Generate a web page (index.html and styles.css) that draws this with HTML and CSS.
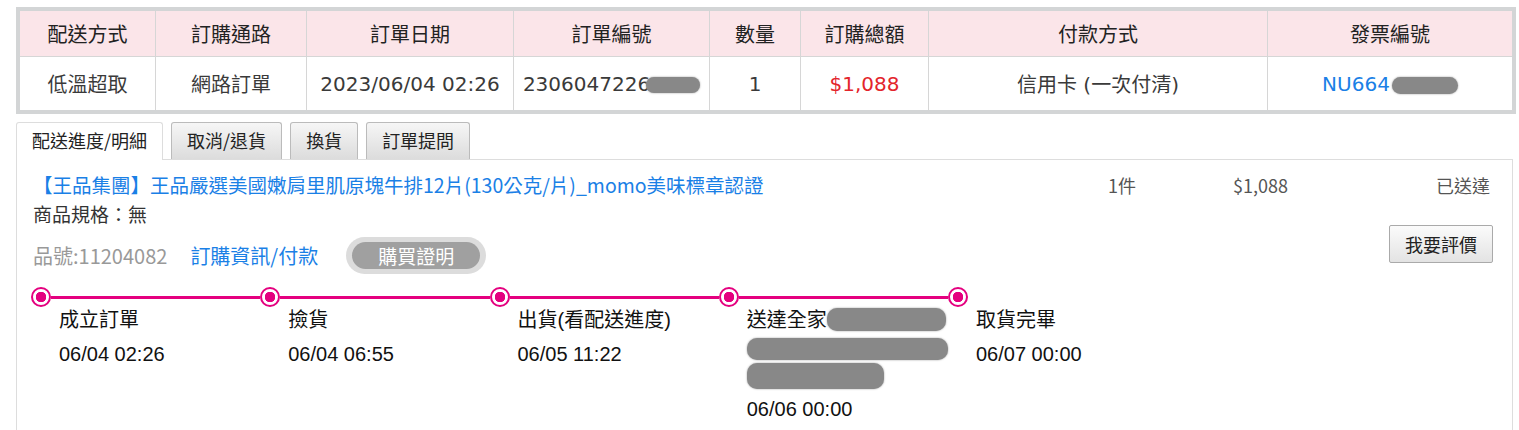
FILE: index.html
```html
<!DOCTYPE html>
<html lang="zh-Hant">
<head>
  <meta charset="UTF-8">
  <meta name="viewport" content="width=device-width, initial-scale=1.0">
  <title>訂單明細</title>
  <link rel="stylesheet" href="styles.css">
</head>
<body>
  <div class="page">
    <!-- order summary -->
    <table class="order-table">
      <colgroup>
        <col style="width:136px">
        <col style="width:151px">
        <col style="width:207px">
        <col style="width:196px">
        <col style="width:91px">
        <col style="width:128px">
        <col style="width:339px">
        <col style="width:244px">
      </colgroup>
      <thead>
        <tr>
          <th>配送方式</th>
          <th>訂購通路</th>
          <th>訂單日期</th>
          <th>訂單編號</th>
          <th>數量</th>
          <th>訂購總額</th>
          <th>付款方式</th>
          <th>發票編號</th>
        </tr>
      </thead>
      <tbody>
        <tr>
          <td>低溫超取</td>
          <td>網路訂單</td>
          <td>2023/06/04 02:26</td>
          <td>2306047226<span class="blot blot-order"></span></td>
          <td>1</td>
          <td class="total">$1,088</td>
          <td>信用卡 (一次付清)</td>
          <td><a class="invoice" href="#">NU664</a><span class="blot blot-invoice"></span></td>
        </tr>
      </tbody>
    </table>

    <!-- tabs -->
    <div class="tabs">
      <span class="tab active">配送進度/明細</span>
      <span class="tab">取消/退貨</span>
      <span class="tab">換貨</span>
      <span class="tab">訂單提問</span>
    </div>

    <div class="panel">
      <div class="item-row">
        <a class="item-name" href="#">【王品集團】王品嚴選美國嫩肩里肌原塊牛排12片(130公克/片)_momo美味標章認證</a>
        <span class="item-qty">1件</span>
        <span class="item-price">$1,088</span>
        <span class="item-status">已送達</span>
      </div>

      <div class="item-detail">
        <div class="item-info">
          <div class="spec">商品規格：無</div>
          <div class="meta">
            <span class="sku">品號:11204082</span>
            <a class="pay-link" href="#">訂購資訊/付款</a>
            <span class="proof"><span>購買證明</span></span>
          </div>
        </div>
        <button class="review" type="button">我要評價</button>
      </div>

      <!-- delivery progress -->
      <ol class="timeline">
        <li>
          <div class="track"><span class="dot"></span><span class="bar"></span></div>
          <div class="step-name">成立訂單</div>
          <div class="step-time">06/04 02:26</div>
        </li>
        <li>
          <div class="track"><span class="dot"></span><span class="bar"></span></div>
          <div class="step-name">撿貨</div>
          <div class="step-time">06/04 06:55</div>
        </li>
        <li>
          <div class="track"><span class="dot"></span><span class="bar"></span></div>
          <div class="step-name">出貨(看配送進度)</div>
          <div class="step-time">06/05 11:22</div>
        </li>
        <li>
          <div class="track"><span class="dot"></span><span class="bar"></span></div>
          <div class="step-name">送達全家<span class="blot blot-store"></span><br><span class="blot blot-addr"></span><br><span class="blot blot-addr2"></span></div>
          <div class="step-time">06/06 00:00</div>
        </li>
        <li>
          <div class="track"><span class="dot"></span></div>
          <div class="step-name">取貨完畢</div>
          <div class="step-time">06/07 00:00</div>
        </li>
      </ol>
    </div>
  </div>
</body>
</html>
```

FILE: styles.css
```css
body {
  margin: 0;
  background: #fff;
  color: #333;
  font-family: "Noto Sans CJK TC", sans-serif;
}
a {
  text-decoration: none;
}
.page {
  padding: 7px 3px 0 16px;
}

/* order table */
.order-table {
  width: 100%;
  table-layout: fixed;
  border-collapse: separate;
  border-spacing: 0;
  border: 4px solid #d3d5d6;
  font-family: "DejaVu Sans", "Noto Sans CJK TC", sans-serif;
  font-size: 20px;
}
.order-table th,
.order-table td {
  padding: 0;
  text-align: center;
  vertical-align: middle;
  border-right: 1px solid #d6d6d6;
  white-space: nowrap;
}
.order-table th:last-child,
.order-table td:last-child {
  border-right: none;
}
.order-table th {
  height: 45px;
  background: #fbe5e9;
  border-bottom: 1px solid #d6d6d6;
  font-family: "Noto Sans CJK TC", sans-serif;
  font-weight: normal;
  font-size: 20px;
  color: #222;
}
.order-table td {
  height: 53px;
  color: #3a3a3a;
}
.order-table td.total {
  color: #e3242b;
}
.invoice {
  color: #1a80e6;
}
.blot {
  display: inline-block;
  background: #888;
  border-radius: 10px;
  box-shadow: 0 0 2px #999;
  vertical-align: middle;
}
.blot-order {
  width: 54px;
  height: 16px;
  margin-left: -4px;
}
.blot-invoice {
  width: 66px;
  height: 17px;
  margin-left: 2px;
}

/* tabs */
.tabs {
  display: flex;
  gap: 8px;
  margin: 8px 3px 0 0;
  border-bottom: 1px solid #ddd;
  font-size: 18px;
}
.tab {
  height: 37px;
  box-sizing: border-box;
  padding: 0 15px;
  line-height: 35px;
  border: 1px solid #bbb;
  border-bottom: none;
  border-radius: 3px 3px 0 0;
  background: linear-gradient(#f6f6f6, #dcdcdc);
  color: #222;
}
.tab.active {
  height: 38px;
  margin-bottom: -1px;
  border-color: #ddd;
  background: #fff;
}

/* panel */
.panel {
  margin-right: 3px;
  min-height: 300px;
  padding: 10px 22px 0 16px;
  border: 1px solid #ddd;
  border-top: none;
}
.item-row {
  display: flex;
  line-height: 30px;
  font-size: 18px;
  color: #555;
}
.item-name {
  flex: 1;
  font-size: 19.5px;
  color: #1a80e6;
}
.item-qty {
  width: 125px;
}
.item-price {
  width: 100px;
}
.item-status {
  width: 157px;
  text-align: right;
}
.item-detail {
  display: flex;
  justify-content: space-between;
  align-items: flex-start;
}
.spec {
  line-height: 28px;
  font-size: 19px;
  color: #333;
}
.meta {
  display: flex;
  align-items: center;
  height: 38px;
  margin-top: 8px;
  font-size: 20px;
}
.sku {
  margin-right: 23px;
  color: #999;
}
.pay-link {
  margin-right: 28px;
  color: #1a80e6;
}
.proof {
  display: inline-flex;
  padding: 5px 6px;
  border-radius: 19px;
  background: #dcdcdc;
}
.proof span {
  width: 128px;
  height: 27px;
  line-height: 27px;
  border-radius: 14px;
  background: #a0a0a0;
  color: #fff;
  text-align: center;
  font-size: 19px;
}
.review {
  width: 104px;
  height: 38px;
  margin: 25px -3px 0 0;
  border: 1px solid #aaa;
  border-radius: 2px;
  background: linear-gradient(#fbfbfb, #e3e3e3);
  color: #222;
  font-family: "Noto Sans CJK TC", sans-serif;
  font-size: 18px;
  cursor: pointer;
}

/* timeline */
.timeline {
  display: flex;
  margin: 13px 0 0 -2px;
  padding: 0;
  list-style: none;
  font-family: "Liberation Sans", "Noto Sans CJK TC", sans-serif;
  font-size: 20px;
  color: #111;
}
.timeline li {
  width: 229.25px;
}
.track {
  display: flex;
  align-items: center;
  height: 20px;
}
.dot {
  width: 20px;
  height: 20px;
  box-sizing: border-box;
  border: 2px solid #e4007f;
  border-radius: 50%;
  background: radial-gradient(circle, #e4007f 0 5px, #fff 5.5px);
}
.bar {
  flex: 1;
  height: 3px;
  background: #e4007f;
}
.step-name {
  padding-left: 28px;
  line-height: 27px;
}
.step-time {
  margin-top: 7px;
  padding-left: 28px;
  line-height: 27px;
}
.blot-store {
  width: 119px;
  height: 23px;
  margin-top: -4px;
}
.blot-addr {
  width: 201px;
  height: 22px;
}
.blot-addr2 {
  width: 137px;
  height: 26px;
}
```
